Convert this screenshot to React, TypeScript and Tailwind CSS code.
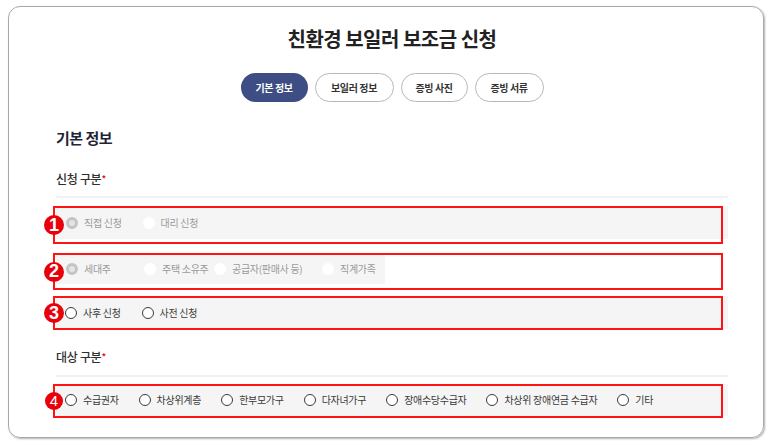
import type { ReactNode } from "react";

type RadioKind = "checkedOff" | "off" | "on";

function Radio({ kind }: { kind: RadioKind }) {
  if (kind === "checkedOff") {
    return <span className="block h-[12px] w-[12px] shrink-0 rounded-full border-[3px] border-[#c4c4c4] bg-[#e4e4e4]" />;
  }
  if (kind === "off") {
    return <span className="block h-[12px] w-[12px] shrink-0 rounded-full bg-white" />;
  }
  return <span className="block h-[12px] w-[12px] shrink-0 rounded-full border border-[#3a3a3a] bg-white" />;
}

function Option({ kind, label, className = "" }: { kind: RadioKind; label: string; className?: string }) {
  const tone = kind === "on" ? "text-[#3a3a3a]" : "text-[#9a9a9a]";
  return (
    <label className={`flex items-center gap-[6px] ${className}`}>
      <Radio kind={kind} />
      <span className={`whitespace-nowrap text-[10px] leading-none tracking-[-0.3px] ${tone}`}>{label}</span>
    </label>
  );
}

function Badge({ n, small }: { n: number; small?: boolean }) {
  return (
    <span
      className={`absolute top-1/2 flex -translate-y-1/2 items-center justify-center rounded-full bg-[#e8000b] text-white ${
        small
          ? "-left-[11px] h-[18px] w-[18px] text-[15px] font-normal"
          : "-left-[12px] h-[20px] w-[20px] text-[18px] font-bold"
      }`}
      style={{ fontFamily: '"Liberation Sans", Arial, sans-serif' }}
    >
      {n}
    </span>
  );
}

function Marked({
  n,
  height,
  grayClass,
  small,
  children,
}: {
  n: number;
  height: string;
  grayClass: string;
  small?: boolean;
  children: ReactNode;
}) {
  return (
    <div className={`relative ${height}`}>
      <div className={`flex items-center bg-[#f5f5f5] ${grayClass}`}>{children}</div>
      <div className="pointer-events-none absolute inset-y-0 -left-[3px] w-[670px] border-2 border-[#ff1414]" />
      <Badge n={n} small={small} />
    </div>
  );
}

function FieldLabel({ text, className = "" }: { text: string; className?: string }) {
  return (
    <div className={`text-[12px] font-medium leading-[18px] tracking-[-0.3px] text-[#2e2e2e] ${className}`}>
      {text}
      <span className="align-top text-[10px] text-[#e60012]">*</span>
    </div>
  );
}

export default function App() {
  const tabs = [
    { name: "기본 정보", w: "w-[67px]", active: true },
    { name: "보일러 정보", w: "w-[79px]", active: false },
    { name: "증빙 사진", w: "w-[67px]", active: false },
    { name: "증빙 서류", w: "w-[69px]", active: false },
  ];

  const targets = ["수급권자", "차상위계층", "한부모가구", "다자녀가구", "장애수당수급자", "차상위 장애연금 수급자", "기타"];

  return (
    <div
      className="min-h-screen bg-white pl-[8px] pt-[6px]"
      style={{ fontFamily: '"Noto Sans CJK KR", "Noto Sans", sans-serif' }}
    >
      <div className="h-[432px] w-[756px] rounded-[12px] border border-[#a8a8a8] pl-[47px] shadow-[1px_1px_2px_rgba(0,0,0,0.3)]">
        <div className="w-[672px]">
          <h1 className="mt-[18px] text-center text-[20px] font-bold leading-[28px] tracking-[-0.5px] text-[#222]">
            친환경 보일러 보조금 신청
          </h1>

          <div className="mt-[20px] flex h-[29px] justify-center gap-[7px]">
            {tabs.map((t) => (
              <div
                key={t.name}
                className={`flex items-center justify-center rounded-full text-[10px] font-bold tracking-[-0.4px] ${t.w} ${
                  t.active ? "bg-[#3e4e84] text-white" : "border border-[#b8b8b8] bg-white text-[#333]"
                }`}
              >
                {t.name}
              </div>
            ))}
          </div>

          <h2 className="mt-[26px] text-[15px] font-bold leading-[20px] tracking-[-0.5px] text-[#1f2438]">기본 정보</h2>

          <FieldLabel text="신청 구분" className="mt-[22px]" />
          <div className="mt-[8px] h-[2px] bg-[#f1f1f1]" />

          <div className="mt-[8px]">
            <Marked n={1} height="h-[38px]" grayClass="mt-[1px] h-[33px] pl-[10px]">
              <Option kind="checkedOff" label="직접 신청" className="mr-[21px]" />
              <Option kind="off" label="대리 신청" />
            </Marked>
          </div>

          <div className="mt-[9px]">
            <Marked n={2} height="h-[37px]" grayClass="mt-[2px] h-[31px] w-[329px] pl-[10px]">
              <Option kind="checkedOff" label="세대주" className="w-[78px]" />
              <Option kind="off" label="주택 소유주" className="w-[70px]" />
              <Option kind="off" label="공급자(판매사 등)" className="w-[108px]" />
              <Option kind="off" label="직계가족" />
            </Marked>
          </div>

          <div className="mt-[6px]">
            <Marked n={3} height="h-[34px]" grayClass="mt-[1px] h-[33px] pl-[9px]">
              <Option kind="on" label="사후 신청" className="mr-[21px]" />
              <Option kind="on" label="사전 신청" />
            </Marked>
          </div>

          <FieldLabel text="대상 구분" className="mt-[18px]" />
          <div className="mt-[9px] h-[2px] bg-[#f1f1f1]" />

          <div className="mt-[7px]">
            <Marked n={4} small height="h-[34px]" grayClass="mt-[2px] h-[32px] gap-[20px] pl-[9px]">
              {targets.map((t) => (
                <Option key={t} kind="on" label={t} />
              ))}
            </Marked>
          </div>
        </div>
      </div>
    </div>
  );
}
